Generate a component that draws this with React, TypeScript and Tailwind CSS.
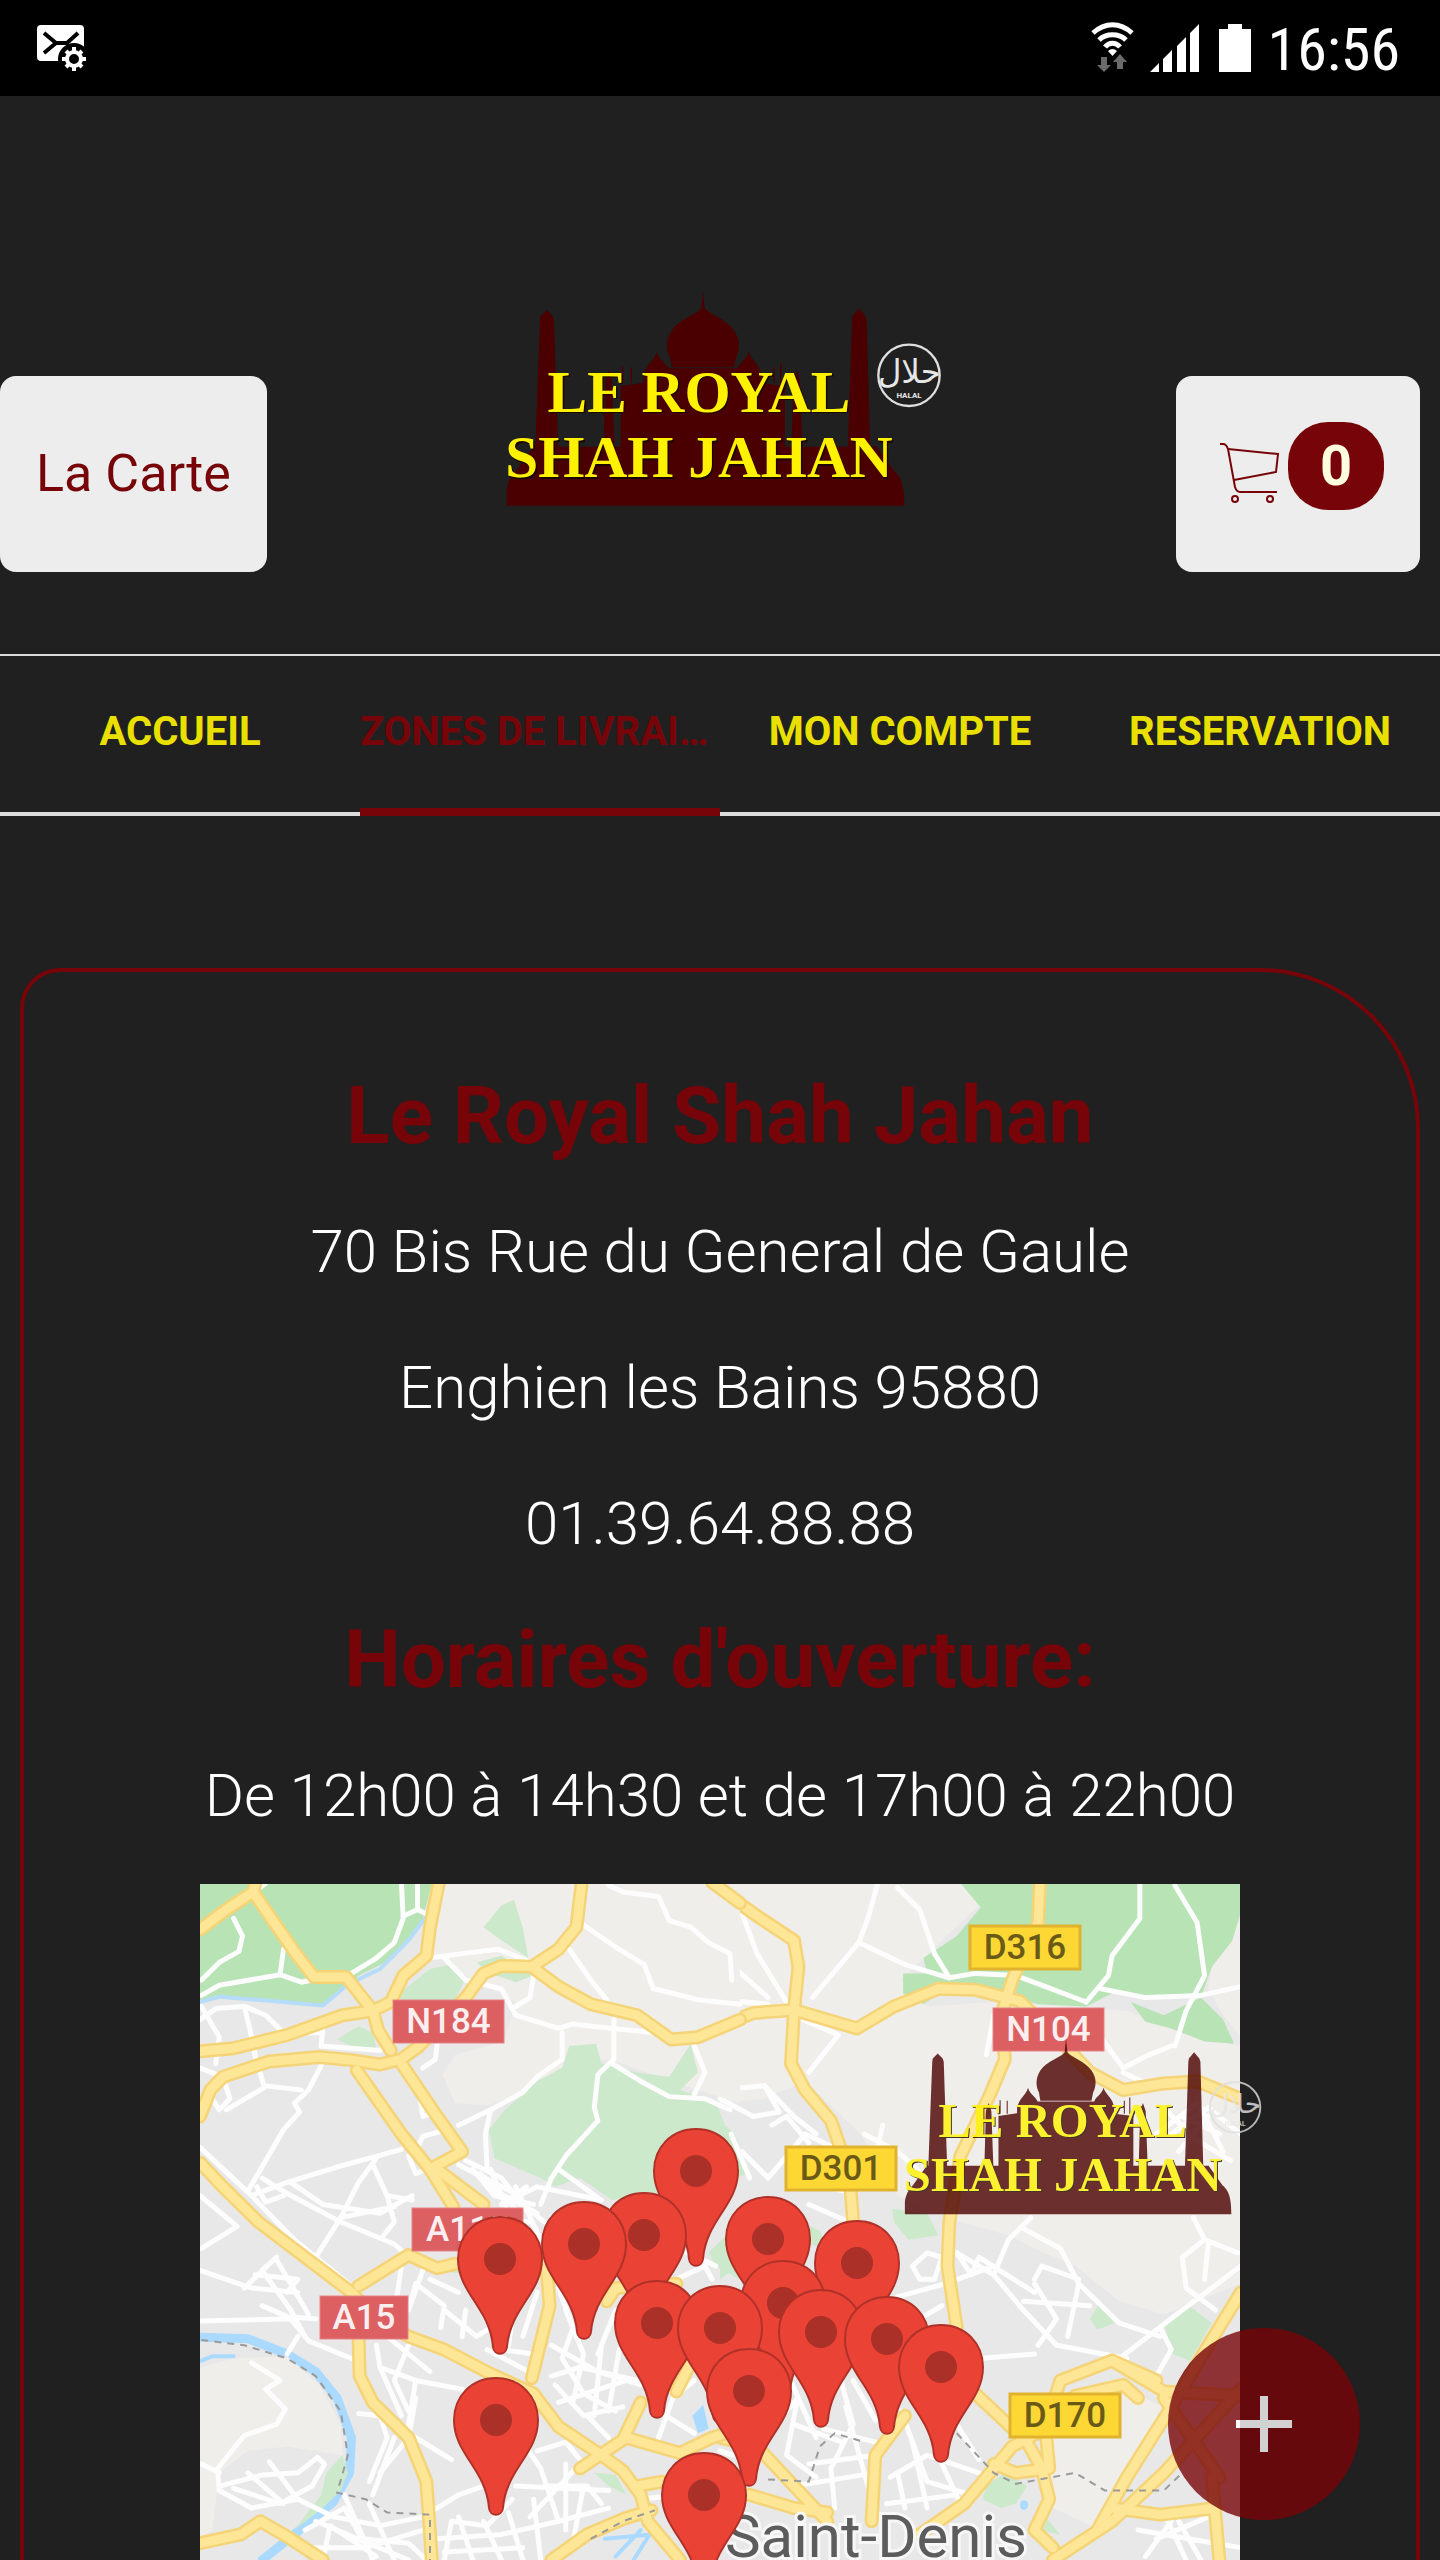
import React, { useState } from 'react';

const TABS = ['Accueil', 'Zones de livraison', 'Mon compte', 'Reservation'];

// Map drawing. West and east halves are drawn on their own sheets.
const WEST_SHEET = 'translate(-20 -14) scale(0.35714 0.44004)';
const EAST_SHEET = 'translate(520 -14) scale(0.3699 0.44004)';

const WEST_SAND = [
    'M745 30H1568V530L1450 500 1200 430 1060 450 960 510 860 535 770 530 735 465 770 420 907 390 940 300 800 240 700 190Z',
    'M56 1130L150 1110 300 1105 390 1170 450 1260 455 1330 300 1310 190 1320 110 1370 90 1500 56 1520Z',
];
const WEST_PARKS = [
    'M850 130L900 80 935 68 960 130 975 200 900 160Z',
    'M630 270L700 225 760 215 800 245 770 295H600Z',
    'M440 385L500 355 540 370 550 405 480 400Z',
    'M1090 400L1165 395 1180 440 1280 460 1370 470 1430 395 1450 460 1400 500 1500 525 1530 590 1450 720 1210 750 1120 700 1050 720 1010 700 880 655 865 590 910 545 1000 480 1070 450Z',
    'M1568 770V930L1500 900 1480 870 1530 830Z',
    'M455 1330L410 1370 395 1420 320 1500 400 1450 450 1410 470 1370Z',
    'M830 210L900 195 990 240 940 255 870 235Z',
    'M1160 1370L1220 1375 1250 1420 1200 1400Z',
    'M755 880H790V915H760Z',
];
const WEST_STREETS = [
    'M620 30L625 110 600 165 550 200 480 235', 'M665 30V90L625 105M665 90L690 100', 'M240 30L200 55',
    'M150 110L175 150 165 185 110 210 60 250', 'M60 285L110 262 280 238 340 255 370 250', 'M280 238L290 180',
    'M700 200L790 190 890 180 970 205', 'M740 200L800 250 900 270 940 330 1060 360 1100 350 1210 360 1330 370',
    'M990 240L980 290 940 310', 'M1200 35L1240 50 1340 60 1370 115 1430 130 1480 165 1540 190 1545 250',
    'M1130 125L1210 170 1300 215 1325 270 1380 280 1450 295 1568 305', 'M1090 180L1150 250 1195 295',
    'M1215 340V430L1170 465 1160 540 1170 570 1080 650 1040 700', 'M1070 370V430L1000 470 960 505 870 545 780 580',
    'M870 545L855 600 860 680', 'M1210 440L1290 480 1370 515 1470 520 1540 545', 'M1440 400L1470 460 1440 510',
    'M56 340L100 315 180 310 240 330 290 370 400 370', 'M180 310L195 360 210 420', 'M60 310L110 380 100 440',
    'M395 400L560 410 600 390', 'M400 360L395 400', 'M395 445L360 500 320 530 335 550 290 590 240 660 190 730',
    'M56 450L120 470 140 520 110 545 90 520', 'M210 420L235 490 340 500', 'M130 545L235 495', 'M680 450L715 430 720 395',
    'M670 510L680 560 720 550', 'M660 640L680 605 750 590',
    'M56 630L200 740 320 840 480 945', 'M56 740L160 810 60 860', 'M200 740L300 710 440 675 620 635', 'M230 700L300 735 450 800 600 850 640 880',
    'M550 655L500 710 450 790 380 880', 'M540 670L580 740 650 750', 'M310 710L400 760 560 780 650 740', 'M215 720L240 755 290 740',
    'M450 790L600 765', 'M580 740L600 800 570 830', 'M640 650L660 690 690 680',
    'M56 910L200 950 330 960', 'M180 950L270 880 230 910 310 1000 350 1060', 'M270 885L360 1010', 'M210 920L330 930 300 960',
    'M60 1025L310 1020 360 1070 480 1110', 'M330 1060L300 1100', 'M230 990L300 1015 380 1020',
    'M780 670L950 740 1000 720 1180 750', 'M800 660L900 700 960 760 1020 800', 'M860 720L1000 780M900 760L970 720M840 690L940 770M940 720L1010 840',
    'M800 720L880 790 980 800M820 680L880 740 990 760M870 680L920 780',
    'M1060 680L1170 745', 'M1000 850L960 800', 'M1040 700L1010 760',
    'M620 900L600 1010M680 910L640 1000 660 940 740 990 730 1040', 'M700 930L780 960M740 1000L830 1060 870 1040', 'M800 1000L790 1060M850 1010L900 1090 990 1100',
    'M860 1090L1000 1150', 'M940 960L920 1080M1000 960L960 1060', 'M1060 950L1100 1040 1070 1110 1130 1190 1220 1230',
    'M1040 1080L1170 1140 1290 1170', 'M1080 1000L1130 1100 1100 1210', 'M1180 1080L1160 1240M1230 1090L1200 1230M1040 1150L1120 1130 1280 1160', 'M1060 1210L1250 1160', 'M1050 1170L1130 1240 1240 1220', 'M1220 1000L1170 1100',
    'M550 1080L560 1130 660 1160 790 1180', 'M640 1080L600 1160 640 1230', 'M500 1235L560 1240 580 1290 530 1390', 'M560 1130L620 1240M660 1160L640 1260',
    'M580 1060L700 1140', 'M640 1280L760 1340M600 1290L540 1420', 'M660 1200L640 1290 560 1370',
    'M200 1120L280 1160 240 1180 295 1225 270 1260 180 1285 105 1360 110 1410 200 1450', 'M110 1400L230 1375 330 1370 385 1335 405 1350 370 1400 280 1440 150 1405', 'M250 1345L330 1430M190 1370L290 1440', 'M60 1350L110 1370',
    'M200 1450L330 1430 430 1470 560 1490 680 1470', 'M350 1500L460 1450 510 1520 640 1530 690 1568', 'M400 1568L420 1490 550 1560M460 1420L540 1568M530 1440L600 1568', 'M360 1540L520 1540 680 1500', 'M380 1480L640 1568',
    'M700 1460L780 1420 850 1400', 'M740 1568L760 1480 860 1490 930 1430', 'M780 1470L820 1568M850 1480L900 1568M920 1460L960 1568M990 1430L1010 1568', 'M720 1520L900 1510 1060 1480', 'M740 1550L960 1540',
    'M960 1300L1010 1360 1060 1480 1200 1450', 'M1000 1320L1080 1300 1130 1350', 'M1020 1400L1140 1400 1180 1440', 'M940 1400L1200 1410', 'M980 1470L1120 1350', 'M1080 1350V1500', 'M1130 1400L1100 1530',
    'M1200 1290L1140 1240M1340 1290L1380 1200 1440 1160', 'M1360 1240L1440 1280', 'M1290 1430L1400 1420',
    'M1250 950L1310 1000M1390 930L1470 900 1490 930', 'M1420 870L1500 900',
];
const WEST_ROADS = [
    'M56 135L130 90 205 50 260 115 320 185 375 243H465L540 320 555 365 590 410',
    'M205 50L212 28', 'M725 28L700 130 690 195 625 240 590 300 540 320 455 330 300 375 150 405 56 412',
    'M56 560L85 500 120 470 250 435 390 425 480 432 560 442 620 430 670 400 800 290 850 235 900 218 985 220 1060 180 1110 130 1125 28',
    'M985 220L1060 265 1150 305 1280 330 1375 385 1450 380 1568 340', 'M1490 28L1568 75',
    'M620 440L720 560 790 640 700 680', 'M495 455L620 600 700 680 765 765', 'M720 680L850 760',
    'M56 665L120 720 220 800 350 880 480 960 550 1020 640 1060 740 1090 870 1145 990 1190 1060 1265 1180 1330 1240 1365 1290 1420 1310 1480 1400 1568',
    'M500 945L640 875 720 905 770 895', 'M500 1060L503 1150 540 1210 640 1290 690 1390 705 1568',
    'M1025 890L1035 990 985 1155', 'M1120 1360L1240 1295 1290 1210', 'M1250 1290L1400 1325 1490 1290 1568 1270', 'M1390 1185L1430 1120',
    'M56 1530L170 1510 225 1480 300 1515 400 1568', 'M1040 1568L1140 1510 1240 1475 1320 1455', 'M1280 1400L1350 1390', 'M1195 980L1220 950 1390 940',
];

const EAST_SAND = [
    'M0 30H660L700 80 600 160 490 250 560 310 740 300 1100 320 1250 370 1408 400V940L1200 1010 1080 980 960 900 850 860 780 830 650 800 480 740 380 600 230 480 120 520 0 530Z',
    'M1330 220L1408 110V380L1360 330 1320 270Z',
    'M880 1240L1090 1180 1200 1220 1030 1500 900 1450Z',
];
const EAST_PARKS = [
    'M650 30H1408V95L1385 160 1330 220 1300 290 1150 290 1060 280 990 310 860 305 760 280 620 265 550 305 495 280 495 235 560 235 550 200 640 150 705 85Z',
    'M1110 300L1200 330 1300 290 1360 340 1390 395 1310 390 1220 360 1150 345Z',
    'M465 770L560 780 590 830 510 840 470 800Z', 'M1030 980L1065 1030 1020 1045 1000 1020Z',
    'M1200 1030L1260 985 1330 1030 1270 1115 1225 1100Z', 'M720 1400L770 1370 830 1400 800 1440 760 1450 710 1430Z',
    'M880 1470L920 1510 860 1500Z', 'M0 570L40 600 75 690 0 710Z', 'M220 800L270 820 290 860 240 850Z',
    'M0 850L50 900 0 930Z',
];
const EAST_STREETS = [
    'M60 100L100 190 180 300', 'M0 175L50 230 130 290M0 295L130 305', 'M425 35L400 110 375 165 250 290', 'M375 165L500 215 620 245 690 235 800 240 880 265 990 300',
    'M480 40L540 90 580 190 620 245', 'M1135 35V110L1060 195 1050 240 990 300', 'M1230 35L1290 120 1310 240 1260 320 1230 400', 'M1030 270L1150 290 1300 285 1408 265',
    'M225 340L320 375 240 460', 'M0 500L120 490 160 550 90 560 0 520', 'M120 490L200 560 260 600', 'M1030 380L1090 450 1160 420 1220 400', 'M1090 460L1140 480',
    'M720 420L740 330', 'M60 640L130 700 230 600 330 640', 'M140 580L180 560 240 620M30 600L80 700', 'M390 600L480 640 560 700', 'M440 580L420 650',
    'M1200 540L1280 610 1380 660M1220 600L1320 540 1408 600M1180 600L1290 530M1300 540L1360 640M1250 560L1350 600M1240 640L1320 560', 'M1280 790L1310 840 1400 870M1310 840L1250 880 1260 950 1340 1000', 'M1320 850L1310 930',
    'M840 790L780 840 740 920 640 870', 'M820 815L920 860 970 940 1080 1030 1190 1060', 'M520 900L560 870 600 880 580 930 540 930Z', 'M480 970L610 940 740 900', 'M640 870L680 920 700 880 850 960',
    'M740 920L820 1000 910 1080 1100 1110', 'M850 930L870 900 970 930', 'M820 980L1000 990M850 940L910 1020 860 1080', 'M970 940L940 1060', 'M1408 900L1250 1000 1080 1110', 'M1190 1040L1220 1090 1180 1150', 'M700 1110L850 1100',
    'M220 710L340 730M240 760L350 800', 'M480 1050L600 990',
    'M140 1270L210 1200 180 1330 260 1380', 'M320 1140L360 1260 300 1360 310 1450', 'M360 1160L420 1250M280 1270L420 1300', 'M200 1260L330 1300M240 1350L420 1330M340 1220L400 1400', 'M200 1400L420 1370', 'M490 1230L560 1390 680 1420', 'M460 1380L560 1330 700 1370', 'M480 1370L500 1450M520 1300L560 1450M600 1350L650 1440M450 1440L640 1420',
    'M640 1260L700 1340', 'M0 1210L60 1290M180 1140L260 1290',
    'M1130 1500L1408 1540M1200 1460L1260 1568M1180 1520L1320 1470M1240 1480L1300 1568', 'M1150 1560L1220 1480', 'M0 1320L70 1340',
];
const EAST_ROADS = [
    'M0 45L110 110 200 160 212 220 200 320 192 440 230 500 300 570 350 690 360 800', 'M0 355L90 325 200 318 370 360 470 310 590 270 690 272 810 298 900 370 1000 460 1090 500 1200 485 1290 480 1408 520',
    'M865 28L860 120 790 250 760 330 770 430 730 510 650 650 620 800 615 900 640 1040', 'M690 1190L830 1300 870 1360 890 1430 850 1500 900 1540',
    'M905 1200L920 1160 1060 1115 1200 1185 1408 1195', 'M960 1195L1090 1170 1130 1200M1060 1115L1180 1160', 'M1408 960L1320 1080 1220 1220 1100 1380 1020 1500', 'M1200 1200L1350 1380',
    'M500 1240L420 1330 410 1480', 'M0 1290L100 1310 200 1400 290 1480', 'M80 1420L200 1450 290 1460', 'M540 1510L660 1440 790 1310 880 1270 890 1360 800 1370 740 1350',
    'M900 1568L1060 1480 1200 1370 1408 1180', 'M1060 1450L1190 1465 1340 1450', 'M1330 1380L1350 1568',
];

const PINS = [
    [496, 287], [444, 351], [384, 360], [300, 375], [568, 355], [657, 379], [583, 419], [457, 439], [520, 444],
    [621, 448], [687, 455], [741, 483], [549, 507], [296, 536], [504, 611],
];

const SHIELDS = [
    { label: 'N184', x: 193, y: 116, w: 111, red: true },
    { label: 'A115', x: 212, y: 324, w: 111, red: true },
    { label: 'A15', x: 120, y: 412, w: 88, red: true },
    { label: 'D316', x: 770, y: 42, w: 110, red: false },
    { label: 'N104', x: 793, y: 124, w: 111, red: true },
    { label: 'D301', x: 586, y: 263, w: 110, red: false },
    { label: 'D170', x: 810, y: 510, w: 110, red: false },
];

interface SheetProps {
    transform: string;
    sand: string[];
    parks: string[];
    streets: string[];
    roads: string[];
}

const strokeProps = {
    fill: 'none',
    strokeLinejoin: 'round',
    strokeLinecap: 'round',
    vectorEffect: 'non-scaling-stroke',
} as const;

const Sheet: React.FC<SheetProps> = ({ transform, sand, parks, streets, roads }) => (
    <g transform={transform}>
        {sand.map((d) => <path key={d} d={d} fill="#f0eeea" />)}
        {parks.map((d, i) => <path key={d} d={d} fill={transform === EAST_SHEET && i < 2 ? '#b7e3b5' : '#cce9cb'} />)}
        {streets.map((d) => <path key={d} d={d} stroke="#fdfdfd" strokeWidth="5" {...strokeProps} />)}
        {roads.map((d) => <path key={d} d={d} stroke="#f5d477" strokeWidth="14" {...strokeProps} />)}
        {roads.map((d) => <path key={d} d={d} stroke="#fee697" strokeWidth="9" {...strokeProps} />)}
    </g>
);

const DeliveryMap = () => (
    <svg viewBox="0 0 1040 676" className="block w-full" role="img" aria-label="Zones de livraison">
        <rect width="1040" height="676" fill="#e8e8e8" />
        <Sheet transform={EAST_SHEET} sand={EAST_SAND} parks={EAST_PARKS} streets={EAST_STREETS} roads={EAST_ROADS} />
        <g transform={WEST_SHEET}>
            <path d="M56 30H705L680 110 600 200 500 240 410 305 250 300 100 285 56 300Z" fill="#b7e3b5" />
            <path d="M56 300L110 288 250 297 400 308 470 260 560 225 640 160 690 105" stroke="#b5dcf8" strokeWidth="4" {...strokeProps} />
            <path d="M56 1062L190 1065 300 1100 380 1140 440 1200 480 1290 475 1370 430 1435 320 1510 230 1568" stroke="#aadaff" strokeWidth="9" {...strokeProps} />
            <path d="M60 1115L90 1105H150M1190 1520L1320 1510M1220 1560L1290 1500M1270 1568L1330 1490" stroke="#aadaff" strokeWidth="4" {...strokeProps} />
            <path d="M1435 1240L1465 1215 1480 1270 1450 1280Z" fill="#aadaff" />
        </g>
        <Sheet transform={WEST_SHEET} sand={WEST_SAND} parks={WEST_PARKS} streets={WEST_STREETS} roads={WEST_ROADS} />

        {/* district borders */}
        <g transform={WEST_SHEET} stroke="#9a9a9a" strokeWidth="2" strokeDasharray="7 6">
            <path d="M60 1068L180 1080 300 1110 380 1150 450 1230 470 1330 440 1415 520 1430 580 1460 700 1465V1568" fill="none" vectorEffect="non-scaling-stroke" />
            <path d="M1150 1520L1240 1480 1330 1455" fill="none" vectorEffect="non-scaling-stroke" />
        </g>
        <g transform={EAST_SHEET} stroke="#9a9a9a" strokeWidth="2" strokeDasharray="7 6">
            <path d="M130 1385L240 1390 270 1310 310 1280 390 1300M640 1280L740 1370 800 1395 960 1370 1040 1410 1200 1410 1250 1370" fill="none" vectorEffect="non-scaling-stroke" />
            <circle cx="822" cy="1443" r="11" fill="#aadaff" stroke="none" />
        </g>

        {SHIELDS.map(({ label, x, y, w, red }) => (
            <g key={label}>
                <rect x={x} y={y} width={w} height="43" fill={red ? '#dc5f62' : '#fdd835'} stroke={red ? '#e58385' : '#e0b22e'} strokeWidth={red ? 1 : 3} />
                <text
                    x={x + w / 2}
                    y={y + 33}
                    textAnchor="middle"
                    fontSize="35"
                    fill={red ? '#fbeeee' : '#6a5a18'}
                    className="font-['Roboto',sans-serif] font-medium"
                >
                    {label}
                </text>
            </g>
        ))}

        <text
            x="676"
            y="673"
            textAnchor="middle"
            fontSize="60"
            fill="#5c5c5c"
            stroke="#f7f7f7"
            strokeWidth="6"
            paintOrder="stroke"
            className="font-['Roboto',sans-serif] font-normal"
        >
            Saint-Denis
        </text>

        {PINS.map(([x, y]) => (
            <g key={`${x}-${y}`} transform={`translate(${x} ${y})`}>
                <path
                    d="M0 -42C25 -42 42 -23 42 0C42 34 10 49 7 88C6 97 -6 97 -7 88C-10 49 -42 34 -42 0C-42 -23 -25 -42 0 -42Z"
                    fill="#ea4335"
                    stroke="#b03128"
                    strokeWidth="2"
                />
                <circle r="16" fill="#ab3027" />
            </g>
        ))}
    </svg>
);

const Logo = ({ className = '' }: { className?: string }) => (
    <svg viewBox="0 0 1440 720" className={className} role="img" aria-label="Le Royal Shah Jahan">
        <g fill="#4a0000">
            <path d="M80 677V630C85 600 95 585 110 570L160 500H1190L1240 570C1265 590 1273 620 1273 677Z" />
            <path d="M165 520L180 120 182 108 200 90 218 108 222 120 235 520Z" />
            <path d="M1103 520L1116 120 1118 108 1137 85 1156 108 1160 120 1171 520Z" />
            <path d="M664 85L669 35 674 85C690 105 735 115 762 152C782 180 780 210 768 232L762 262H575L570 232C558 210 557 180 575 152C600 115 650 105 664 85Z" />
            <path d="M490 290C495 255 525 240 530 215C537 240 560 250 565 265H772C777 248 800 240 806 215C813 240 843 255 845 290V310L915 318V520H422V318L490 308Z" />
            <path d="M370 520L376 300 386 270 396 300 404 520ZM934 520L940 300 950 270 960 300 968 520Z" />
            <path d="M426 310V260H430V310ZM452 310V262H456V310ZM880 310V262H884V310ZM900 310V250H904V310Z" />
        </g>
        <g className="font-['Liberation_Serif',serif] font-bold" fontSize="178" textAnchor="middle">
            <text x="661" y="399" fill="#1a0500">LE ROYAL</text>
            <text x="657" y="395" fill="#fff200">LE ROYAL</text>
            <text x="661" y="596" fill="#1a0500">SHAH JAHAN</text>
            <text x="657" y="592" fill="#fff200">SHAH JAHAN</text>
        </g>
        <circle cx="1287" cy="286" r="92" fill="none" stroke="#dedede" strokeWidth="7" />
        <g fill="#e6e6e6" textAnchor="middle">
            <text x="1288" y="308" fontSize="98" className="font-['DejaVu_Sans',sans-serif] font-normal">حلال</text>
            <text x="1287" y="355" fontSize="24" className="font-['Roboto',sans-serif] font-bold">HALAL</text>
        </g>
    </svg>
);

const StatusBar = () => (
    <div className="flex h-24 items-center justify-between bg-black pl-9 pr-10 text-white">
        <svg viewBox="0 0 52 50" className="h-[50px] w-[52px]" aria-hidden="true">
            <rect x="1" y="2" width="47" height="36" rx="4" fill="#fff" />
            <path d="M8 10L20 20H31L42 10M20 20L8 30" fill="none" stroke="#000" strokeWidth="4" />
            <circle cx="38" cy="36" r="16" fill="#000" />
            <circle cx="38" cy="36" r="7" fill="none" stroke="#fff" strokeWidth="4" />
            <path
                d="M38 24V29M38 43V48M26 36H31M45 36H50M30 28L33 31M43 41L46 44M46 28L43 31M33 41L30 44"
                stroke="#fff"
                strokeWidth="4"
            />
        </svg>
        <div className="flex items-center">
            <svg viewBox="0 0 162 52" className="mr-4 h-[52px] w-[162px]" aria-hidden="true">
                <g fill="none" stroke="#fff" strokeWidth="5">
                    <path d="M3 11C15 0 30 0 42 11" />
                    <path d="M9 18C16 11 29 11 36 18" />
                    <path d="M15 25C19 20 26 20 30 25" />
                </g>
                <path d="M18 29Q22.500 25 27 29L22.500 34Z" fill="#fff" />
                <path d="M11 35H17V43H21L14 50 7 43H11ZM27 47H33V40H37L30 32 23 40H27Z" fill="#6b6b6b" />
                <path d="M60 50L69 41V50ZM73 50V37L82 28V50ZM87 50V24L96 15V50ZM100 50V11L109 2V50Z" fill="#fff" />
                <path d="M129 50V7H138V2H152V7H161V50Z" fill="#fff" />
            </svg>
            <span className="mt-1 font-['Roboto_Condensed','Roboto',sans-serif] text-[60px] leading-none">16:56</span>
        </div>
    </div>
);

const CartIcon = () => (
    <svg viewBox="0 0 60 62" className="h-[62px] w-[60px]" fill="none" stroke="#770408" strokeWidth="2" aria-hidden="true">
        <path d="M0 2H3C6 2 7 4 8 7L15 45C16 48 17 50 20 50H57" />
        <path d="M8 7L58 12 56 30 14 38" />
        <circle cx="15" cy="57" r="3" />
        <circle cx="50" cy="57" r="3" />
    </svg>
);

const App: React.FC = () => {
    const [activeTab, setActiveTab] = useState(1);
    const [cartCount] = useState(0);

    return (
        <div className="relative min-h-screen overflow-hidden bg-[#202020] font-['Roboto',sans-serif] text-white">
            <StatusBar />

            <header className="grid grid-cols-[1fr_480px_1fr] items-start pb-[82px] pt-[184px]">
                <button type="button" className="mt-24 h-[196px] w-[267px] rounded-2xl bg-[#ededed] text-[52px] text-[#770408]">
                    La Carte
                </button>
                <Logo className="h-60 w-full" />
                <button
                    type="button"
                    aria-label="Panier"
                    className="mr-5 mt-24 flex h-[196px] w-[244px] items-start justify-center gap-2 justify-self-end rounded-2xl bg-[#ededed] pl-2 pt-[46px]"
                >
                    <span className="mt-5">
                        <CartIcon />
                    </span>
                    <span className="flex h-[88px] w-24 items-center justify-center rounded-[40px] bg-[#770408] text-[56px] font-bold text-[#ffffe0]">
                        {cartCount}
                    </span>
                </button>
            </header>

            <nav className="grid grid-cols-4 border-b-4 border-t-2 border-[#dbdbdb]">
                {TABS.map((tab, index) => (
                    <button
                        key={tab}
                        type="button"
                        onClick={() => setActiveTab(index)}
                        className={`-mb-1 h-40 truncate border-b-8 text-[40px] font-bold uppercase ${
                            index === activeTab ? 'border-[#770408] text-[#770408]' : 'border-transparent text-[#eae000]'
                        }`}
                    >
                        {tab}
                    </button>
                ))}
            </nav>

            <main className="mx-5 mt-[152px] flex flex-col gap-10 rounded-tl-[40px] rounded-tr-[160px] border-4 border-b-0 border-[#770408] pt-24 text-center text-[60px] font-light leading-[96px]">
                <h1 className="text-[80px] font-bold text-[#770408]">Le Royal Shah Jahan</h1>
                <p>70 Bis Rue du General de Gaule</p>
                <p>Enghien les Bains 95880</p>
                <p>01.39.64.88.88</p>
                <h2 className="text-[80px] font-bold text-[#770408]">Horaires d'ouverture:</h2>
                <p>De 12h00 à 14h30 et de 17h00 à 22h00</p>
                <div className="relative mx-44">
                    <DeliveryMap />
                    <Logo className="absolute -right-[37px] top-[145px] w-[394px] opacity-80" />
                </div>
            </main>

            <button
                type="button"
                aria-label="Ajouter"
                className="fixed bottom-10 right-20 flex size-48 items-center justify-center rounded-full bg-[#770408] opacity-80"
            >
                <svg viewBox="0 0 56 56" className="size-14" stroke="#fff" strokeWidth="8" aria-hidden="true">
                    <path d="M28 0V56M0 28H56" />
                </svg>
            </button>
        </div>
    );
};

export default App;
